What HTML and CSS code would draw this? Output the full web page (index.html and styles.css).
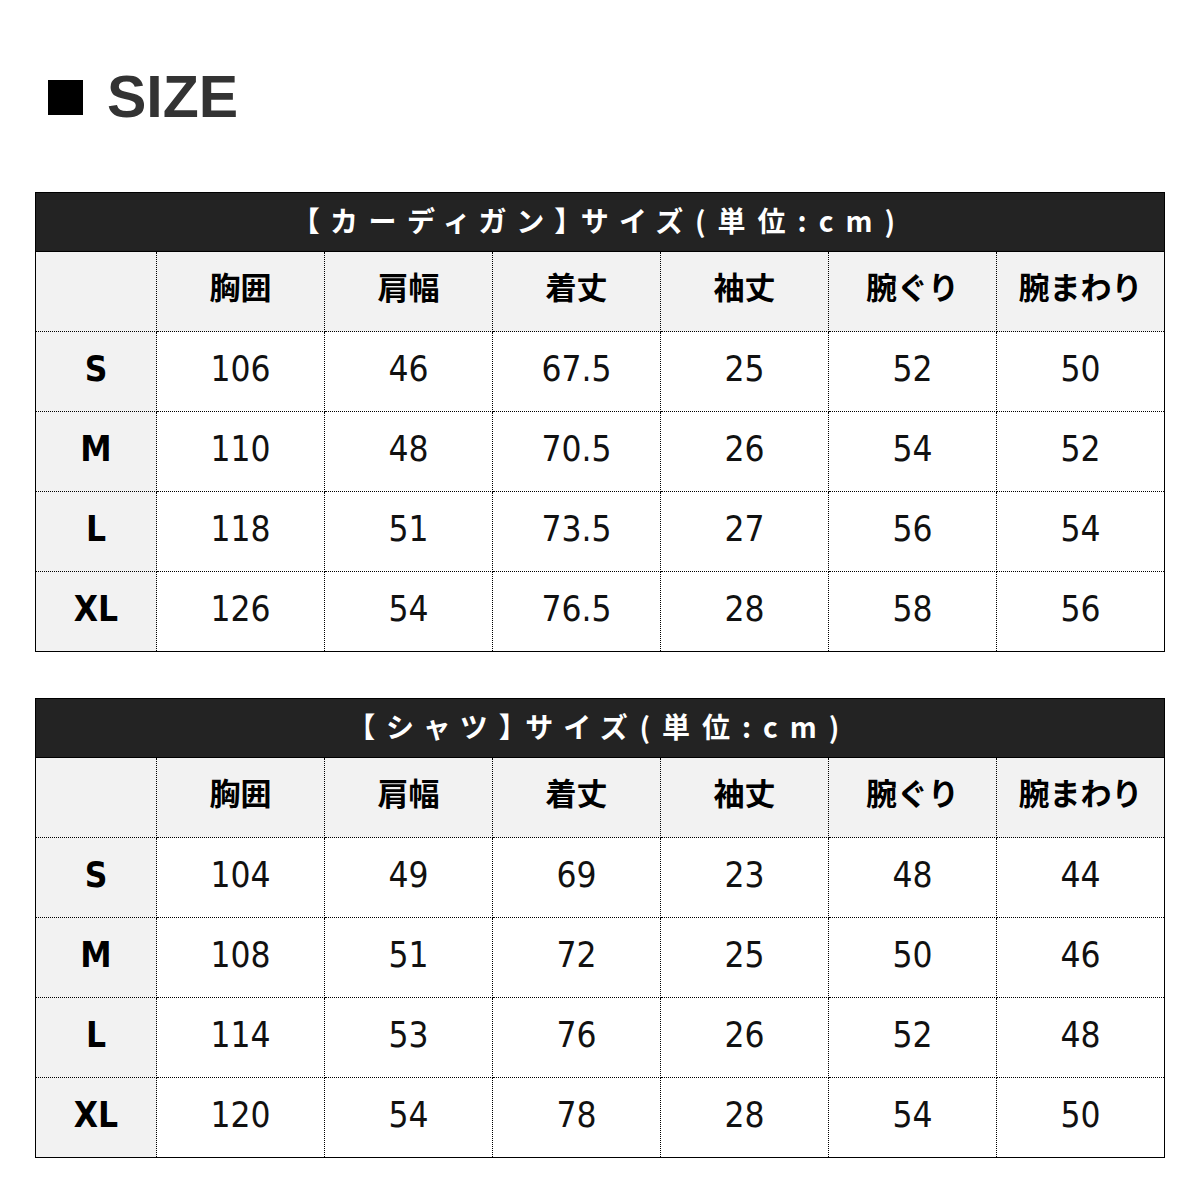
FILE: index.html
```html
<!DOCTYPE html>
<html lang="ja">
<head>
<meta charset="utf-8">
<title>SIZE</title>
<link rel="stylesheet" href="styles.css">
</head>
<body>
<div class="page">
  <h1 class="title"><span class="title-mark"></span><span class="title-text">SIZE</span></h1>

  <table class="size-table">
    <colgroup><col class="c-first"><col class="c-val"><col class="c-val"><col class="c-val"><col class="c-val"><col class="c-val"><col class="c-val"></colgroup>
    <thead>
      <tr><th class="caption" colspan="7">【カーディガン】サイズ(単位:cm)</th></tr>
      <tr class="head-row"><th class="corner"></th><th>胸囲</th><th>肩幅</th><th>着丈</th><th>袖丈</th><th>腕ぐり</th><th>腕まわり</th></tr>
    </thead>
    <tbody>
      <tr><th class="size">S</th><td>106</td><td>46</td><td>67.5</td><td>25</td><td>52</td><td>50</td></tr>
      <tr><th class="size">M</th><td>110</td><td>48</td><td>70.5</td><td>26</td><td>54</td><td>52</td></tr>
      <tr><th class="size">L</th><td>118</td><td>51</td><td>73.5</td><td>27</td><td>56</td><td>54</td></tr>
      <tr><th class="size">XL</th><td>126</td><td>54</td><td>76.5</td><td>28</td><td>58</td><td>56</td></tr>
    </tbody>
  </table>

  <table class="size-table second">
    <colgroup><col class="c-first"><col class="c-val"><col class="c-val"><col class="c-val"><col class="c-val"><col class="c-val"><col class="c-val"></colgroup>
    <thead>
      <tr><th class="caption" colspan="7">【シャツ】サイズ(単位:cm)</th></tr>
      <tr class="head-row"><th class="corner"></th><th>胸囲</th><th>肩幅</th><th>着丈</th><th>袖丈</th><th>腕ぐり</th><th>腕まわり</th></tr>
    </thead>
    <tbody>
      <tr><th class="size">S</th><td>104</td><td>49</td><td>69</td><td>23</td><td>48</td><td>44</td></tr>
      <tr><th class="size">M</th><td>108</td><td>51</td><td>72</td><td>25</td><td>50</td><td>46</td></tr>
      <tr><th class="size">L</th><td>114</td><td>53</td><td>76</td><td>26</td><td>52</td><td>48</td></tr>
      <tr><th class="size">XL</th><td>120</td><td>54</td><td>78</td><td>28</td><td>54</td><td>50</td></tr>
    </tbody>
  </table>
</div>
</body>
</html>
```

FILE: styles.css
```css
html, body {
  margin: 0;
  padding: 0;
  background: #fff;
}

.page {
  width: 1200px;
  padding: 67px 35px 0 35px;
  box-sizing: border-box;
}

.title {
  display: flex;
  align-items: center;
  gap: 24px;
  margin: 0 0 65px 0;
  padding-left: 13px;
  height: 60px;
}

.title-mark {
  display: block;
  width: 35px;
  height: 35px;
  background: #000;
}

.title-text {
  font-family: "Liberation Sans", Arial, sans-serif;
  font-weight: 700;
  font-size: 59px;
  line-height: 60px;
  color: #333;
}

.size-table {
  width: 1130px;
  border-collapse: collapse;
  table-layout: fixed;
  border: 1px solid #000;
  font-family: "DejaVu Sans Condensed", "DejaVu Sans", sans-serif;
  color: #000;
}

.size-table.second {
  margin-top: 46px;
}

.c-first { width: 121px; }
.c-val { width: 168px; }

.size-table th,
.size-table td {
  border: 1px dotted #000;
  padding: 0;
  text-align: center;
  vertical-align: middle;
}

.size-table .caption {
  height: 59px;
  background: #232323;
  color: #fff;
  border: 1px solid #000;
  font-family: "Noto Sans CJK JP", sans-serif;
  font-weight: 700;
  font-size: 28px;
  font-feature-settings: "palt";
  letter-spacing: 12px;
  padding-left: 12px;
  padding-bottom: 5px;
  box-sizing: border-box;
}

.head-row th {
  height: 80px;
  background: #f2f2f2;
  font-family: "Noto Sans CJK JP", sans-serif;
  font-weight: 700;
  font-size: 31px;
  padding-bottom: 12px;
  box-sizing: border-box;
}

.size-table td {
  height: 80px;
  font-size: 35px;
  font-weight: 400;
  color: #111;
  padding-bottom: 6px;
  box-sizing: border-box;
}

.size-table .size {
  background: #f2f2f2;
  font-weight: 700;
  font-size: 35px;
  padding-bottom: 6px;
  box-sizing: border-box;
}
```
